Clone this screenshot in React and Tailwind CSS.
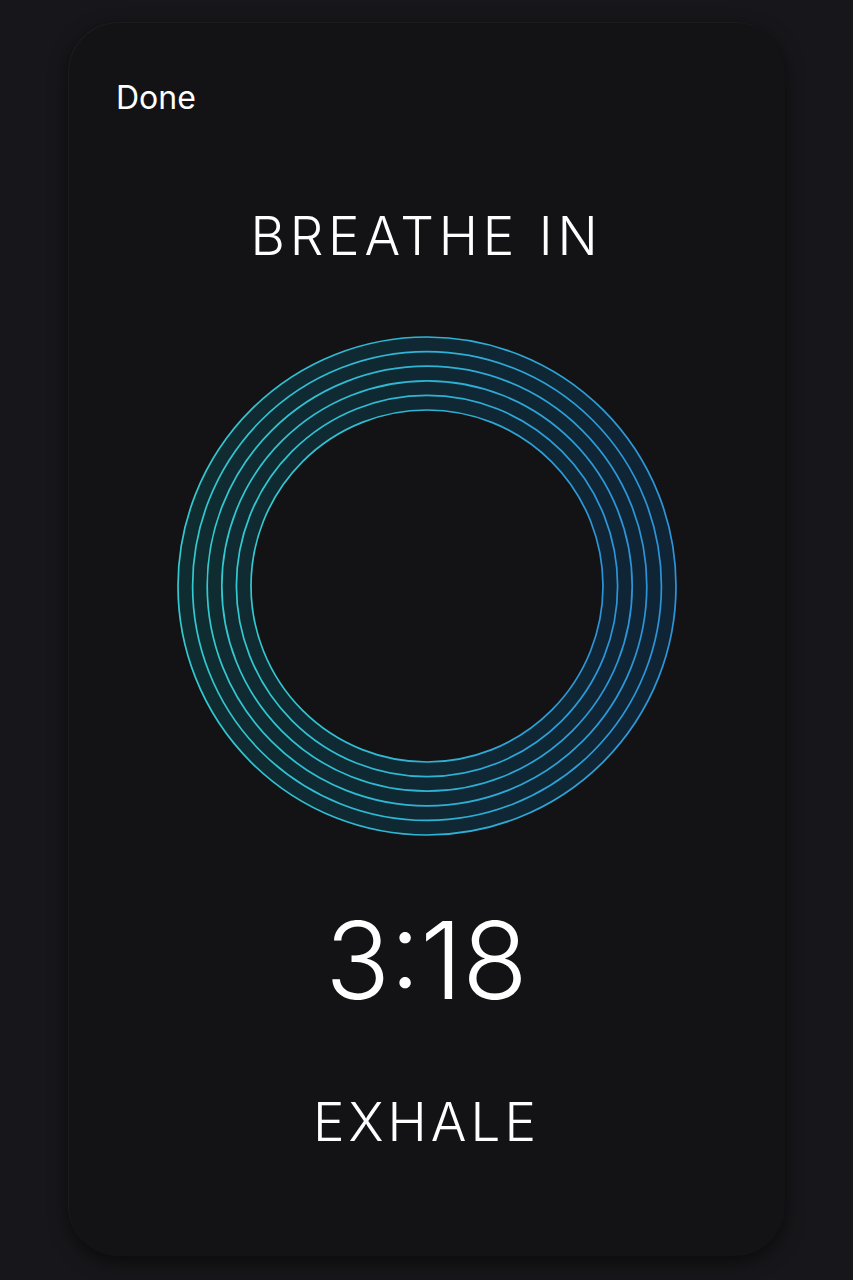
import React from "react";

function Rings() {
  const radii = [249, 234.4, 219.8, 205.2, 190.6, 176];
  return (
    <svg width="504" height="504" viewBox="0 0 504 504" className="block">
      <defs>
        <linearGradient id="stroke" x1="0" y1="0" x2="1" y2="0">
          <stop offset="0" stopColor="#33c9cf" />
          <stop offset="0.5" stopColor="#2fb3d4" />
          <stop offset="1" stopColor="#2c93d8" />
        </linearGradient>
        <linearGradient id="band" x1="0" y1="0" x2="1" y2="0">
          <stop offset="0" stopColor="#0f2c31" />
          <stop offset="1" stopColor="#0f2536" />
        </linearGradient>
      </defs>
      <circle cx="252" cy="252" r="212.5" fill="none" stroke="url(#band)" strokeWidth="73" />
      {radii.map((r) => (
        <circle key={r} cx="252" cy="252" r={r} fill="none" stroke="url(#stroke)" strokeWidth="1.7" />
      ))}
    </svg>
  );
}

export default function App() {
  return (
    <div
      className="min-h-[1280px] w-full bg-[#17171b] pt-[22px]"
      style={{ fontFamily: "Inter, 'Liberation Sans', sans-serif" }}
    >
      <div className="mx-auto flex h-[1234px] w-[717px] flex-col items-center rounded-[50px] bg-[#131316] shadow-[0_6px_18px_rgba(0,0,0,0.55),inset_1px_1px_0_rgba(255,255,255,0.04)]">
        <div className="w-full px-[48px] pt-[56px]">
          <span className="text-[32px] leading-[40px] text-white">Done</span>
        </div>
        <div className="mt-[88px] text-[53px] font-[350] leading-[60px] tracking-[0.09em] text-white">
          BREATHE IN
        </div>
        <div className="mt-[68px]">
          <Rings />
        </div>
        <div className="mt-[62px] text-[107px] font-[350] leading-[120px] text-white">
          3:18
        </div>
        <div className="mt-[72px] text-[53px] font-[350] leading-[60px] tracking-[0.075em] text-white">
          EXHALE
        </div>
      </div>
    </div>
  );
}
